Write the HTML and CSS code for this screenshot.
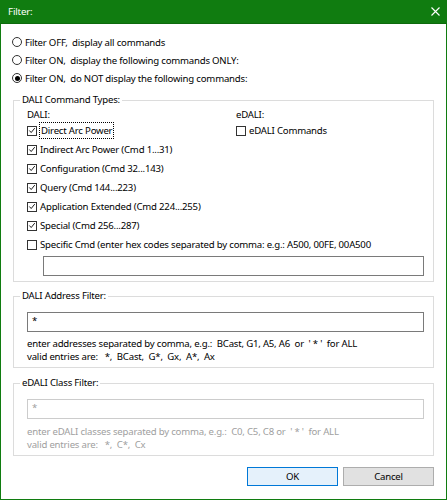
FILE: index.html
```html
<!DOCTYPE html>
<html>
<head>
<meta charset="utf-8">
<link rel="stylesheet" href="styles.css">
</head>
<body>
<div class="window">
  <div class="titlebar">
    <span class="title">Filter:</span>
    <svg class="close" width="9" height="9" viewBox="0 0 9 9"><path d="M0.5 0.5 L8.5 8.5 M8.5 0.5 L0.5 8.5" stroke="#fff" stroke-width="1.1" fill="none"/></svg>
  </div>
  <div class="content">
    <div class="radios">
      <div class="row radio-row"><span class="radio"></span><span class="lbl">Filter OFF,  display all commands</span></div>
      <div class="row radio-row"><span class="radio"></span><span class="lbl">Filter ON,  display the following commands ONLY:</span></div>
      <div class="row radio-row"><span class="radio selected"></span><span class="lbl">Filter ON,  do NOT display the following commands:</span></div>
    </div>

    <fieldset class="group group-types">
      <legend>DALI Command Types:</legend>
      <div class="group-body types-body">
        <div class="types-grid">
          <div class="col">
            <div class="col-label">DALI:</div>
            <div class="row check-row"><span class="cb checked"><svg width="9" height="9" viewBox="0 0 9 9"><path d="M1.5 4.5 L3.6 6.8 L7.6 1.8" stroke="#000" stroke-width="1" fill="none"/></svg></span><span class="lbl focus">Direct Arc Power</span></div>
            <div class="row check-row"><span class="cb checked"><svg width="9" height="9" viewBox="0 0 9 9"><path d="M1.5 4.5 L3.6 6.8 L7.6 1.8" stroke="#000" stroke-width="1" fill="none"/></svg></span><span class="lbl">Indirect Arc Power (Cmd 1...31)</span></div>
            <div class="row check-row"><span class="cb checked"><svg width="9" height="9" viewBox="0 0 9 9"><path d="M1.5 4.5 L3.6 6.8 L7.6 1.8" stroke="#000" stroke-width="1" fill="none"/></svg></span><span class="lbl">Configuration (Cmd 32...143)</span></div>
            <div class="row check-row"><span class="cb checked"><svg width="9" height="9" viewBox="0 0 9 9"><path d="M1.5 4.5 L3.6 6.8 L7.6 1.8" stroke="#000" stroke-width="1" fill="none"/></svg></span><span class="lbl">Query (Cmd 144...223)</span></div>
            <div class="row check-row"><span class="cb checked"><svg width="9" height="9" viewBox="0 0 9 9"><path d="M1.5 4.5 L3.6 6.8 L7.6 1.8" stroke="#000" stroke-width="1" fill="none"/></svg></span><span class="lbl">Application Extended (Cmd 224...255)</span></div>
            <div class="row check-row"><span class="cb checked"><svg width="9" height="9" viewBox="0 0 9 9"><path d="M1.5 4.5 L3.6 6.8 L7.6 1.8" stroke="#000" stroke-width="1" fill="none"/></svg></span><span class="lbl">Special (Cmd 256...287)</span></div>
          </div>
          <div class="col">
            <div class="col-label">eDALI:</div>
            <div class="row check-row"><span class="cb"></span><span class="lbl">eDALI Commands</span></div>
          </div>
        </div>
        <div class="row check-row"><span class="cb"></span><span class="lbl">Specific Cmd (enter hex codes separated by comma: e.g.: A500, 00FE, 00A500</span></div>
        <div class="textbox indent"></div>
      </div>
    </fieldset>

    <fieldset class="group group-addr">
      <legend>DALI Address Filter:</legend>
      <div class="group-body">
        <div class="textbox">*</div>
        <div class="hints">
          <div class="hint">enter addresses separated by comma, e.g.:  BCast, G1, A5, A6  or  ' * '  for ALL</div>
          <div class="hint">valid entries are:   *,  BCast,  G*,  Gx,  A*,  Ax</div>
        </div>
      </div>
    </fieldset>

    <fieldset class="group group-class disabled">
      <legend>eDALI Class Filter:</legend>
      <div class="group-body">
        <div class="textbox">*</div>
        <div class="hints">
          <div class="hint">enter eDALI classes separated by comma, e.g.:  C0, C5, C8 or  ' * '  for ALL</div>
          <div class="hint">valid entries are:   *,  C*,  Cx</div>
        </div>
      </div>
    </fieldset>

    <div class="buttons">
      <button class="btn btn-default">OK</button>
      <button class="btn">Cancel</button>
    </div>
  </div>
</div>
</body>
</html>
```

FILE: styles.css
```css
* { box-sizing: border-box; }
html, body { margin: 0; padding: 0; background: #ffffff; }
body {
  font-family: "Noto Sans", "Open Sans", "Liberation Sans", sans-serif;
  font-size: 9.6px;
  letter-spacing: -0.2px;
  color: #000;
}
.window {
  width: 447px;
  height: 500px;
  border: 1px solid #107c10;
  border-top: none;
  background: #fff;
  display: flex;
  flex-direction: column;
}
.titlebar {
  height: 24px;
  background: #107c10;
  margin: 0 -1px;
  padding: 0 7px 0 8px;
  display: flex;
  align-items: center;
  justify-content: space-between;
  color: #fff;
  border-bottom: 1px solid #0d6a0d;
}
.title { font-size: 9.8px; }
.close { display: block; }
.content {
  flex: 1;
  padding: 9px 12px 0 12px;
  display: flex;
  flex-direction: column;
}
.row {
  display: flex;
  align-items: center;
  white-space: pre;
}
.radio-row { height: 18px; margin-left: -1px; }
.radio {
  width: 10px;
  height: 10px;
  border: 1px solid #333;
  border-radius: 50%;
  margin-right: 3px;
  display: flex;
  align-items: center;
  justify-content: center;
  flex: none;
}
.radio.selected::after {
  content: "";
  width: 5px;
  height: 5px;
  border-radius: 50%;
  background: #000;
}
.group {
  margin: 6px 0 0 0;
  padding: 0;
  border: 1px solid #dcdcdc;
  min-inline-size: 0;
}
.group legend {
  margin-left: 6px;
  padding: 0 2px;
  line-height: 14px;
  height: 14px;
}
.group-addr { margin-top: 7px; }
.group-class { margin-top: 8px; }
.group-body {
  padding: 9px 9px 4px 13px;
}
.types-body { padding-top: 2px; padding-bottom: 5px; }
.types-grid {
  display: grid;
  grid-template-columns: 209px 1fr;
}
.col-label { height: 12px; line-height: 12px; }
.check-row { height: 19px; }
.cb {
  width: 10px;
  height: 10px;
  border: 1px solid #333;
  margin-right: 3px;
  flex: none;
  display: flex;
  align-items: center;
  justify-content: center;
  background: #fff;
}
.cb svg { display: block; }
.focus {
  outline: 1px dotted #000;
  outline-offset: 0;
  padding: 1px 1px;
}
.textbox {
  height: 20px;
  border: 1px solid #7a7a7a;
  background: #fff;
  padding: 2px 4px;
  line-height: 12px;
}
.textbox.indent { margin-left: 16px; margin-top: 2px; }
.hints { margin-top: 5px; }
.hint { line-height: 13px; white-space: pre; }
.group-class .hints { margin-top: 6px; }
.disabled .textbox { border-color: #cccccc; color: #a0a0a0; }
.disabled .hint { color: #a0a0a0; }
.buttons {
  display: flex;
  justify-content: flex-end;
  gap: 5px;
  margin-top: 11px;
}
.btn {
  width: 91px;
  height: 19px;
  font-family: inherit;
  font-size: 9.6px;
  letter-spacing: inherit;
  color: #000;
  background: #e1e1e1;
  border: 1px solid #adadad;
  padding: 0;
  margin: 0;
}
.btn-default {
  background: #e5f1fb;
  border-color: #0078d7;
}
```
